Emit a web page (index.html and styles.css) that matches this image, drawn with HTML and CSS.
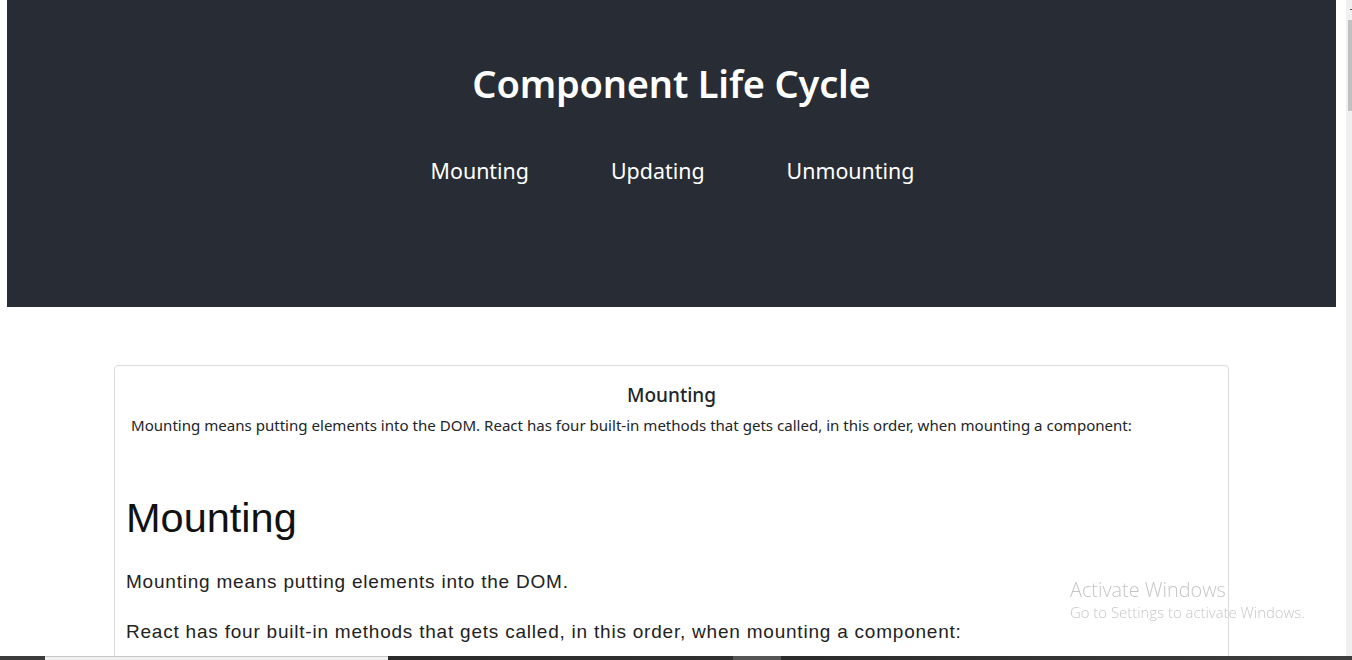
FILE: index.html
```html
<!DOCTYPE html>
<html lang="en">
<head>
<meta charset="utf-8">
<title>Component Life Cycle</title>
<link rel="stylesheet" href="styles.css">
</head>
<body>
<div class="page">
  <header class="hero">
    <h1 class="hero-title">Component Life Cycle</h1>
    <nav class="hero-nav">
      <a class="hero-link" href="#">Mounting</a>
      <a class="hero-link" href="#">Updating</a>
      <a class="hero-link" href="#">Unmounting</a>
    </nav>
  </header>
  <main class="content">
    <section class="card">
      <div class="card-body">
        <h5 class="card-title">Mounting</h5>
        <p class="card-text">Mounting means putting elements into the DOM. React has four built-in methods that gets called, in this order, when mounting a component:</p>
      </div>
      <div class="doc">
        <h2 class="doc-title">Mounting</h2>
        <p class="doc-text">Mounting means putting elements into the DOM.</p>
        <p class="doc-text">React has four built-in methods that gets called, in this order, when mounting a component:</p>
      </div>
    </section>
  </main>
</div>
<div class="scrollbar"><div class="scroll-arrow"></div><div class="scroll-thumb"></div></div>
<div class="watermark">
  <div class="wm-title">Activate Windows</div>
  <div class="wm-sub">Go to Settings to activate Windows.</div>
</div>
<div class="taskbar">
  <div class="tb-seg tb-a"></div>
  <div class="tb-seg tb-b"></div>
  <div class="tb-seg tb-c"></div>
  <div class="tb-seg tb-d"></div>
  <div class="tb-seg tb-e"></div>
</div>
</body>
</html>
```
FILE: styles.css
```css
html, body {
  margin: 0;
  padding: 0;
  height: 100%;
  overflow: hidden;
  background: #ffffff;
}
body {
  font-family: "Noto Sans", "Open Sans", sans-serif;
  color: #212529;
}
.page {
  width: 1329px;
  margin-left: 7px;
}
.hero {
  background: #282c34;
  height: 307px;
  color: #ffffff;
  display: flex;
  flex-direction: column;
  align-items: center;
  box-sizing: border-box;
  padding-top: 56px;
}
.hero-title {
  margin: 0;
  font-size: 38px;
  font-weight: 600;
  line-height: 54px;
  letter-spacing: -0.2px;
}
.hero-nav {
  display: flex;
  gap: 82px;
  margin-top: 45px;
  padding-left: 2px;
}
.hero-link {
  color: #ffffff;
  text-decoration: none;
  font-size: 21.4px;
  line-height: 32px;
}
.content {
  padding: 58px 107px 0;
}
.card {
  border: 1px solid #dcdcdc;
  border-radius: 4px;
  height: 400px;
}
.card-body {
  padding: 15px 16px 0;
}
.card-title {
  margin: 0 0 5px;
  text-align: center;
  font-size: 19px;
  font-weight: 500;
  line-height: 28px;
  color: #212529;
}
.card-text {
  margin: 0;
  font-size: 15.07px;
  line-height: 22px;
  color: #212529;
}
.doc {
  padding: 58px 0 0 11px;
  font-family: "Liberation Sans", Arial, sans-serif;
  color: #111111;
}
.doc-title {
  margin: 0 0 28px;
  font-size: 41.5px;
  font-weight: 400;
  line-height: 48px;
}
.doc-text {
  margin: 0 0 27px;
  font-size: 19px;
  letter-spacing: 0.78px;
  line-height: 23px;
  color: #222222;
}
.scrollbar {
  position: fixed;
  top: 0;
  right: 0;
  width: 6px;
  height: 656px;
  background: #f0f0f0;
}
.scroll-thumb {
  position: absolute;
  left: 2px;
  right: 0;
  top: 20px;
  height: 91px;
  background: #c1c1c1;
}
.scroll-arrow {
  position: absolute;
  right: 0;
  top: 9px;
  width: 2px;
  height: 1px;
  background: #505050;
}
.watermark {
  position: fixed;
  left: 1070px;
  top: 578px;
  color: rgba(150, 150, 150, 0.55);
  font-family: "Open Sans", "Noto Sans", sans-serif;
}
.wm-title {
  font-size: 19.85px;
  font-weight: 300;
  line-height: 24px;
}
.wm-sub {
  font-size: 14.9px;
  font-weight: 300;
  line-height: 20px;
}
.taskbar {
  position: fixed;
  left: 0;
  right: 0;
  bottom: 0;
  height: 4px;
  display: flex;
}
.tb-seg { height: 4px; }
.tb-a { width: 45px; background: #3c3c3c; }
.tb-b { width: 343px; background: #f0f0f0; border-top: 1px solid #c8c8c8; box-sizing: border-box; }
.tb-c { width: 345px; background: linear-gradient(90deg, #2b2b2b, #303030); }
.tb-d { width: 48px; background: #555555; }
.tb-e { flex: 1; background: linear-gradient(90deg, #2b2b2b, #3e3e3e); }
```
